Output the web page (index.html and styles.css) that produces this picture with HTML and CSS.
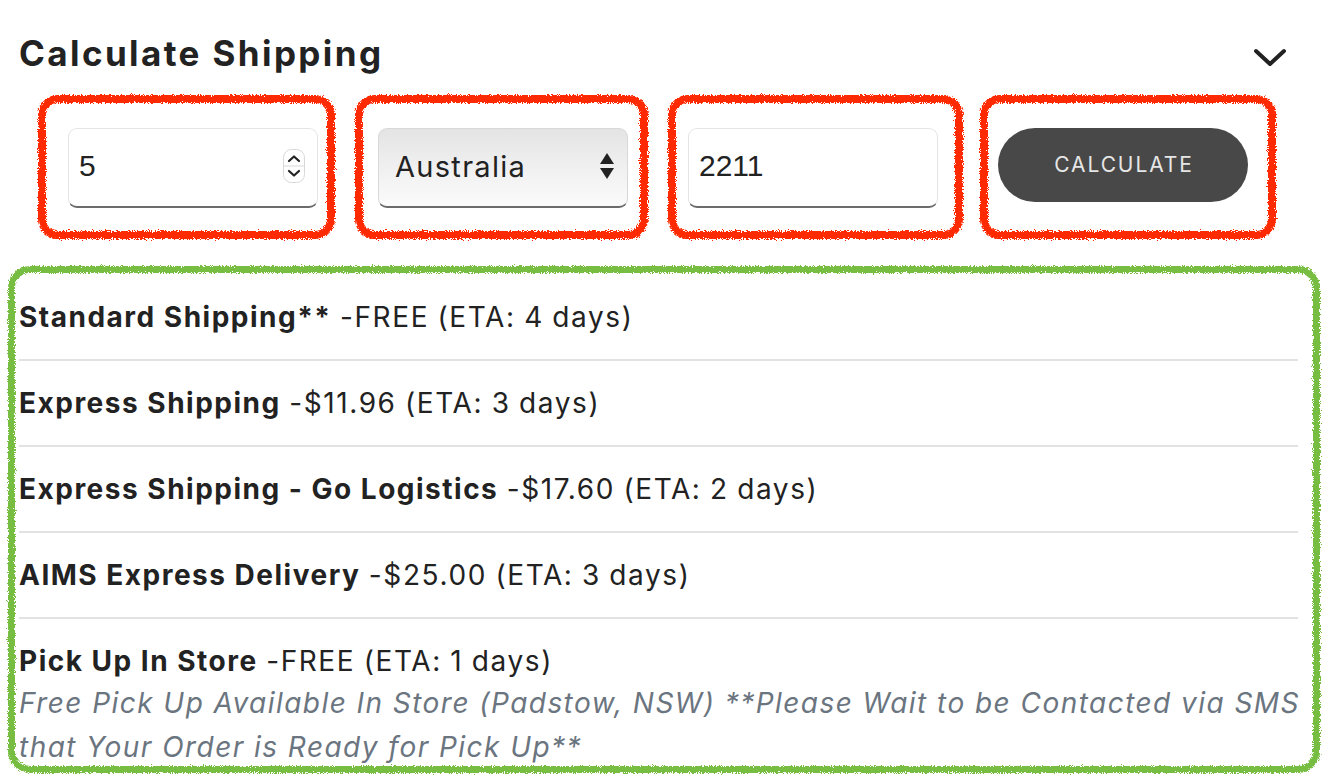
FILE: index.html
```html
<!DOCTYPE html>
<html>
<head>
<meta charset="utf-8">
<link rel="stylesheet" href="styles.css">
</head>
<body>
<svg class="defs" width="0" height="0" aria-hidden="true">
  <defs>
    <filter id="rough" x="-5%" y="-5%" width="110%" height="110%">
      <feTurbulence type="fractalNoise" baseFrequency="1.1" numOctaves="2" seed="3" result="noise"/>
      <feDisplacementMap in="SourceGraphic" in2="noise" scale="6" xChannelSelector="R" yChannelSelector="G"/>
    </filter>
  </defs>
</svg>
<div class="page">
  <div class="header">
    <h2 class="title">Calculate Shipping</h2>
    <svg class="chevron" width="34" height="20" viewBox="0 0 34 20"><path d="M3 3 L17 16 L31 3" fill="none" stroke="#222" stroke-width="4" stroke-linecap="round" stroke-linejoin="round"/></svg>
  </div>

  <div class="form">
    <div class="field">
      <div class="input">
        <span class="val num">5</span>
        <span class="spinner">
          <svg width="22" height="34" viewBox="0 0 22 34"><rect x="0.5" y="0.5" width="21" height="33" rx="8" fill="#fff" stroke="#d8d8d8"/><line x1="1" y1="17" x2="21" y2="17" stroke="#d8d8d8"/><path d="M6 12 L11 7.5 L16 12" fill="none" stroke="#222" stroke-width="2.2" stroke-linecap="round" stroke-linejoin="round"/><path d="M6 22 L11 26.5 L16 22" fill="none" stroke="#222" stroke-width="2.2" stroke-linecap="round" stroke-linejoin="round"/></svg>
        </span>
      </div>
      <div class="mark red m1"></div>
    </div>
    <div class="field">
      <div class="input select">
        <span class="val">Australia</span>
        <svg class="arrows" width="16" height="32" viewBox="0 0 16 32"><path d="M8 3 L15 14 L1 14 Z" fill="#222"/><path d="M1 18 L15 18 L8 29 Z" fill="#222"/></svg>
      </div>
      <div class="mark red m2"></div>
    </div>
    <div class="field">
      <div class="input">
        <span class="val num">2211</span>
      </div>
      <div class="mark red m3"></div>
    </div>
    <div class="field">
      <button class="btn">CALCULATE</button>
      <div class="mark red m4"></div>
    </div>
  </div>

  <div class="results">
    <div class="row"><b>Standard Shipping**</b> -FREE (ETA: 4 days)</div>
    <div class="row"><b>Express Shipping</b> -$11.96 (ETA: 3 days)</div>
    <div class="row"><b>Express Shipping - Go Logistics</b> -$17.60 (ETA: 2 days)</div>
    <div class="row"><b>AIMS Express Delivery</b> -$25.00 (ETA: 3 days)</div>
    <div class="row last"><b>Pick Up In Store</b> -FREE (ETA: 1 days)
      <div class="note">Free Pick Up Available In Store (Padstow, NSW) **Please Wait to be Contacted via SMS that Your Order is Ready for Pick Up**</div>
    </div>
    <div class="mark green"></div>
  </div>
</div>
</body>
</html>
```

FILE: styles.css
```css
* { box-sizing: border-box; }
html, body { margin: 0; padding: 0; background: #fff; }
body {
  font-family: "Inter", "Noto Sans", "Liberation Sans", sans-serif;
  color: #222;
  width: 1328px;
  height: 776px;
  overflow: hidden;
}
.defs { position: absolute; width: 0; height: 0; }
.page { padding: 33px 0 0 19px; }

.header {
  display: flex;
  align-items: center;
  justify-content: space-between;
  padding-right: 41px;
  height: 40px;
}
.title {
  margin: 0;
  font-size: 35px;
  line-height: 40px;
  font-weight: 700;
  letter-spacing: 2.4px;
  color: #222;
}
.chevron { display: block; margin-top: 10px; }

.form {
  display: flex;
  gap: 60px;
  margin-top: 55px;
  padding-left: 49px;
}
.field { position: relative; width: 250px; height: 80px; }
.input {
  height: 80px;
  width: 250px;
  background: #fff;
  border-radius: 9px;
  border: 1px solid #e4e4e4;
  border-bottom: 2px solid #6c6c6c;
  display: flex;
  align-items: center;
  padding: 0 12px 3px 10px;
  justify-content: space-between;
}
.val { font-size: 29px; color: #222; }
.val.num { font-family: "Liberation Sans", Arial, sans-serif; font-size: 30px; }
.spinner { display: block; height: 34px; margin-right: 0; }
.spinner svg { display: block; }
.select {
  background: linear-gradient(#e4e4e4, #f2f2f2 60%, #fbfbfb);
  border: 1px solid #d8d8d8;
  border-bottom: 2px solid #6c6c6c;
  padding: 0 12px 3px 16px;
}
.select .val { font-size: 29px; letter-spacing: 1.3px; }
.arrows { display: block; }

.btn {
  width: 250px;
  height: 74px;
  border: none;
  border-radius: 37px;
  background: #484848;
  color: #e6e6e6;
  font-family: "Inter", "Noto Sans", sans-serif;
  font-size: 21px;
  letter-spacing: 1.9px;
  padding: 0 0 2px 2px;
  margin: 0;
  display: block;
}

.mark {
  position: absolute;
  pointer-events: none;
  filter: url(#rough);
}
.red {
  border: 8px solid #ff2a00;
  border-radius: 20px;
  top: -33px;
  bottom: -31px;
}
.m1 { left: -30px; right: -17px; }
.m2 { left: -23px; right: -20px; }
.m3 { left: -20px; right: -25px; }
.m4 { left: -18px; right: -28px; }

.results {
  position: relative;
  margin-top: 67px;
  width: 1279px;
}
.row {
  font-size: 28px;
  line-height: 40px;
  padding: 22px 0;
  border-bottom: 2px solid #e2e2e2;
  color: #222;
  letter-spacing: 1.6px;
  word-spacing: -1px;
}
.row b { font-weight: 700; word-spacing: 0; letter-spacing: 1.5px; }
.row.last { border-bottom: none; padding-bottom: 0; }
.note {
  font-style: italic;
  color: #6b7580;
  line-height: 44px;
  margin-top: 0;
  letter-spacing: 1.45px;
  word-spacing: 0;
  margin-right: -2px;
}
.green {
  border: 7px solid #76bd43;
  border-radius: 22px;
  top: -9px;
  left: -11px;
  right: -22px;
  bottom: -4px;
}
```
